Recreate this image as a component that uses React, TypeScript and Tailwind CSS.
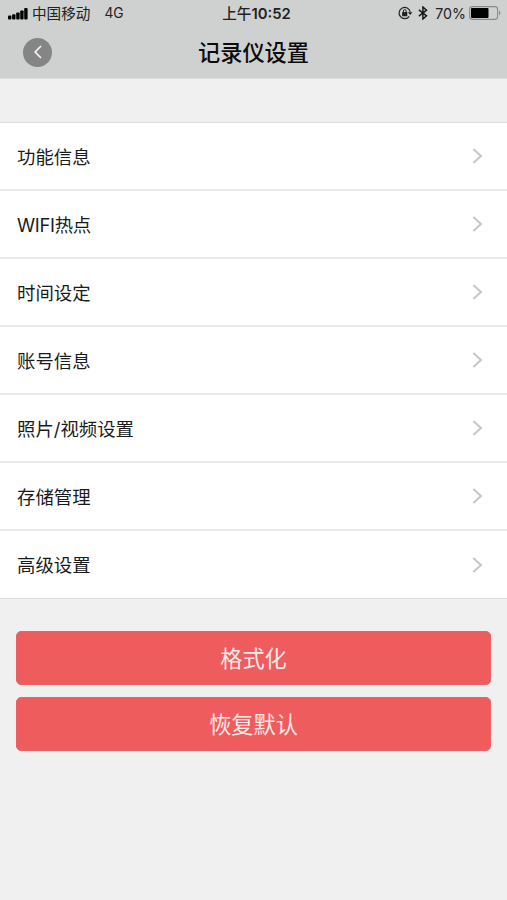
import React from 'react';

const items = ['功能信息', 'WIFI热点', '时间设定', '账号信息', '照片/视频设置', '存储管理', '高级设置'];

const actions = ['格式化', '恢复默认'];

function SignalIcon() {
    return (
        <svg className="w-5 h-3" viewBox="0 0 20 12" fill="#000">
            <rect x="0" y="7.5" width="3.4" height="3.9" rx="0.9" />
            <rect x="4.1" y="6.2" width="3.4" height="5.2" rx="0.9" />
            <rect x="8.2" y="4.4" width="3.4" height="7" rx="0.9" />
            <rect x="12.2" y="2.4" width="3.4" height="9" rx="0.9" />
            <rect x="16.2" y="0" width="3.4" height="11.4" rx="0.9" />
        </svg>
    );
}

function RotationLockIcon() {
    return (
        <svg className="w-[15px] h-[14px]" viewBox="0 0 15 14" fill="none" stroke="#222" strokeWidth="1.2">
            <path d="M11.3 10.3A5.6 5.6 0 1 1 12.2 6" />
            <path d="M9.9 6.2h4.6l-2.3 2.9z" fill="#222" stroke="none" />
            <rect x="4.1" y="6.1" width="5.2" height="4.1" rx="0.5" fill="#222" stroke="none" />
            <path d="M5.3 6.4V5a1.4 1.4 0 0 1 2.8 0v1.4" strokeWidth="1" />
        </svg>
    );
}

function BluetoothIcon() {
    return (
        <svg className="w-[10px] h-[14px]" viewBox="0 0 10 14" fill="none" stroke="#1a1a1a" strokeWidth="1.5">
            <path d="M0.9 3.8l7.6 6L4.9 13V1l3.6 3.2-7.6 6" />
        </svg>
    );
}

function BatteryIcon() {
    return (
        <svg className="w-8 h-[14px]" viewBox="0 0 32 14">
            <rect x="0.6" y="0.6" width="28" height="12.8" rx="2.8" fill="none" stroke="#898b8b" strokeWidth="1.1" />
            <rect x="2" y="2" width="17.5" height="10" rx="1" fill="#000" />
            <path d="M30 4.8c1.8.5 1.8 3.9 0 4.4z" fill="#898b8b" />
        </svg>
    );
}

function StatusBar() {
    return (
        <div className="grid grid-cols-3 items-center h-[27px] pl-2 pr-1.5 text-[#222] text-[14.6px] leading-none">
            <div className="flex items-center">
                <SignalIcon />
                <span className="ml-1 pt-0.5">中国移动</span>
                <span className="ml-3.5 text-[13.8px]">4G</span>
            </div>
            <div className="text-center font-medium pt-0.5 pl-1">
                上午<span className="font-semibold text-[14.8px]">10:52</span>
            </div>
            <div className="flex justify-end items-center">
                <RotationLockIcon />
                <span className="ml-[5px] flex">
                    <BluetoothIcon />
                </span>
                <span className="ml-[7px] mr-[3px] pt-px text-[14.2px]">70%</span>
                <BatteryIcon />
            </div>
        </div>
    );
}

export default function App(): React.ReactElement {
    return (
        <div className="min-h-screen bg-[#f0f0f0] font-[Inter,'Noto_Sans_CJK_SC',sans-serif]">
            <header className="h-[79px] bg-[#cfd1d0] border-b border-[#dcdddc]">
                <StatusBar />
                <div className="grid grid-cols-[60px_1fr_60px] items-center h-[50px]">
                    <button className="ml-[23px] flex items-center justify-center w-[29px] h-[29px] rounded-full bg-[#858585]">
                        <svg className="w-2 h-[14px]" viewBox="0 0 8 14" fill="none" stroke="#f5f5f5" strokeWidth="1.7">
                            <path d="M7 1L1.2 7 7 13" />
                        </svg>
                    </button>
                    <h1 className="pt-0.5 text-center text-[22.2px] leading-none font-medium text-[#0c0c0c]">记录仪设置</h1>
                </div>
            </header>

            <ul className="mt-[43px] bg-white border-t border-[#dedede]">
                {items.map((item) => (
                    <li
                        key={item}
                        className="flex items-center justify-between h-[68px] pl-[17px] pr-6 border-b-2 border-[#e9e9e9] last:border-b last:border-[#dcdcdc] text-[18.4px] text-[#1b1b1b]"
                    >
                        <span className={item.startsWith('WIFI') ? 'pt-[3px] tracking-[-0.3px]' : 'pt-[3px]'}>{item}</span>
                        <svg className="w-[11px] h-4" viewBox="0 0 11 16" fill="none" stroke="#c6c6c6" strokeWidth="2">
                            <path d="M1.3 1L9 8l-7.7 7" />
                        </svg>
                    </li>
                ))}
            </ul>

            <div className="flex flex-col gap-3 pl-4 pr-4 pt-8">
                {actions.map((action) => (
                    <button
                        key={action}
                        className="h-[54px] pt-0.5 rounded-[5px] bg-[#ee5c5e] border border-[#e76165] text-[22.2px] leading-none text-[#fdeaea]"
                    >
                        {action}
                    </button>
                ))}
            </div>
        </div>
    );
}
